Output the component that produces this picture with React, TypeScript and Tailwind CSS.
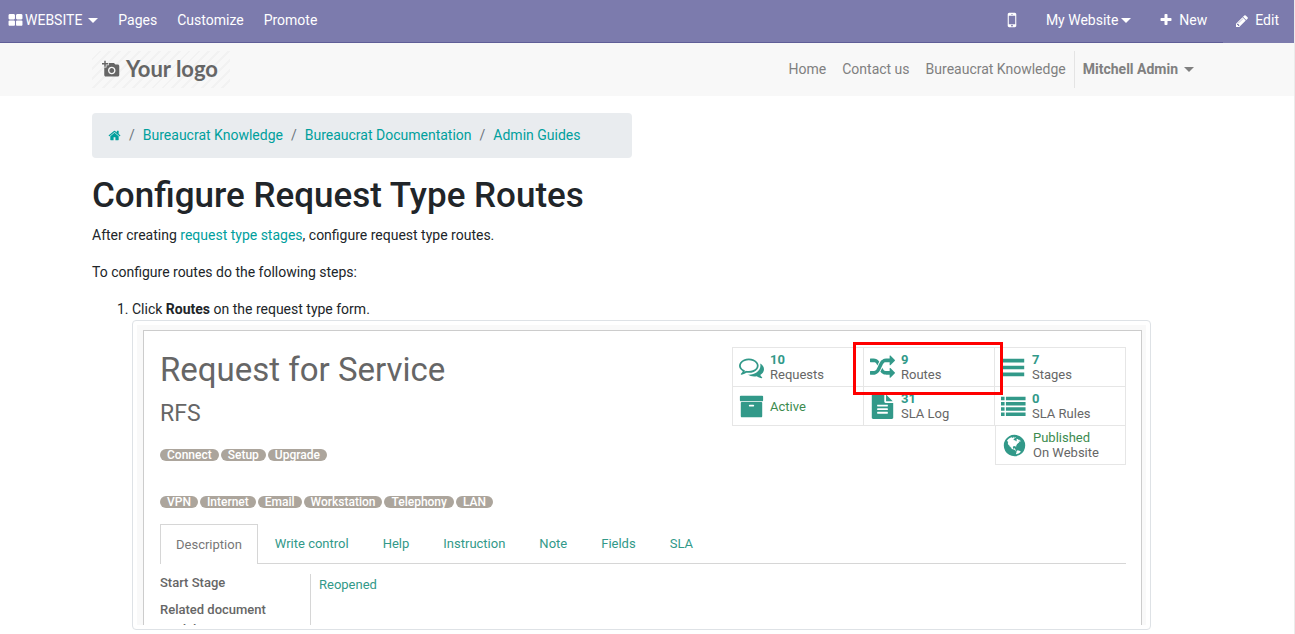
import type { ReactNode } from "react";
import { MdAddAPhoto } from "react-icons/md";

const paths = {
  thLarge:
    "M832 1024v384q0 52-38 90t-90 38h-512q-52 0-90-38t-38-90v-384q0-52 38-90t90-38h512q52 0 90 38t38 90zm0-768v384q0 52-38 90t-90 38h-512q-52 0-90-38t-38-90v-384q0-52 38-90t90-38h512q52 0 90 38t38 90zm896 768v384q0 52-38 90t-90 38h-512q-52 0-90-38t-38-90v-384q0-52 38-90t90-38h512q52 0 90 38t38 90zm0-768v384q0 52-38 90t-90 38h-512q-52 0-90-38t-38-90v-384q0-52 38-90t90-38h512q52 0 90 38t38 90z",
  mobile:
    "M976 1408q0-33-23.5-56.5t-56.5-23.5-56.5 23.5-23.5 56.5 23.5 56.5 56.5 23.5 56.5-23.5 23.5-56.5zm208-160v-704q0-13-9.5-22.5t-22.5-9.5h-512q-13 0-22.5 9.5t-9.5 22.5v704q0 13 9.5 22.5t22.5 9.5h512q13 0 22.5-9.5t9.5-22.5zm-192-848q0-16-16-16h-160q-16 0-16 16t16 16h160q16 0 16-16zm288-16v1024q0 52-38 90t-90 38h-512q-52 0-90-38t-38-90v-1024q0-52 38-90t90-38h512q52 0 90 38t38 90z",
  plus: "M1600 736v192q0 40-28 68t-68 28h-416v416q0 40-28 68t-68 28h-192q-40 0-68-28t-28-68v-416h-416q-40 0-68-28t-28-68v-192q0-40 28-68t68-28h416v-416q0-40 28-68t68-28h192q40 0 68 28t28 68v416h416q40 0 68 28t28 68z",
  pencil:
    "M491 1536l91-91-235-235-91 91v107h128v128h107zm523-928q0-22-22-22-10 0-17 7l-542 542q-7 7-7 17 0 22 22 22 10 0 17-7l542-542q7-7 7-17zm-54-192l416 416-832 832h-416v-416zm683 96q0 53-37 90l-166 166-416-416 166-165q36-38 90-38 53 0 91 38l235 234q37 39 37 91z",
  home: "M1472 992v480q0 26-19 45t-45 19h-384v-384h-256v384h-384q-26 0-45-19t-19-45v-480q0-1 .5-3t.5-3l575-474 575 474q1 2 1 6zm223-69l-62 74q-8 9-21 11h-3q-13 0-21-7l-692-577-692 577q-12 8-24 7-13-2-21-11l-62-74q-8-10-7-23.5t11-21.5l719-599q32-26 76-26t76 26l244 204v-195q0-14 9-23t23-9h192q14 0 23 9t9 23v408l219 182q10 8 11 21.5t-7 23.5z",
  comments:
    "M704 384q-153 0-286 52t-211.5 141-78.5 191q0 82 53 158t149 132l97 56-35 84q34-20 62-39l44-31 53 10q78 14 153 14 153 0 286-52t211.5-141 78.5-191-78.5-191-211.5-141-286-52zm0-128q191 0 353.5 68.5t256.5 186.5 94 257-94 257-256.5 186.5-353.5 68.5q-86 0-176-16-124 88-278 128-36 9-86 16h-3q-11 0-20.5-8t-11.5-21q-1-3-1-6.5t.5-6.5 2-6l2.5-5 3.5-5.5 4-5 4.5-5 4-4.5q5-6 23-25t26-29.5 22.5-29 25-38.5 20.5-44q-124-72-195-177t-71-224q0-139 94-257t256.5-186.5 353.5-68.5zm822 1169q10 24 20.5 44t25 38.5 22.5 29 26 29.5 23 25q1 1 4 4.5t4.5 5 4 5 3.5 5.5l2.5 5 2 6 .5 6.5-1 6.5q-3 14-13 22t-22 7q-50-7-86-16-154-40-278-128-90 16-176 16-271 0-472-132 58 4 88 4 161 0 309-45t264-129q125-92 192-212t67-254q0-77-23-152 129 71 204 178t75 230q0 120-71 224.5t-195 176.5z",
  random:
    "M666 481q-60 92-137 273-22-45-37-72.5t-40.5-63.5-51-56.5-63-35-81.5-14.5h-224q-14 0-23-9t-9-23v-192q0-14 9-23t23-9h224q250 0 410 225zm1126 799q0 14-9 23l-320 320q-9 9-23 9-13 0-22.5-9.5t-9.5-22.5v-192q-32 0-85 .5t-81 1-73-1-71-5-64-10.5-63-18.5-58-28.5-59-40-55-53.5-56-69.5q59-93 136-273 22 45 37 72.5t40.5 63.5 51 56.5 63 35 81.5 14.5h256v-192q0-14 9-23t23-9q12 0 24 10l319 319q9 9 9 23zm0-896q0 14-9 23l-320 320q-9 9-23 9-13 0-22.5-9.5t-9.5-22.5v-192h-256q-48 0-87 15t-69 45-51 61.5-45 77.5q-32 62-78 171-29 66-49.5 111t-54 105-64 100-74 83-90 68.5-106.5 42-128 16.5h-224q-14 0-23-9t-9-23v-192q0-14 9-23t23-9h224q48 0 87-15t69-45 51-61.5 45-77.5q32-62 78-171 29-66 49.5-111t54-105 64-100 74-83 90-68.5 106.5-42 128-16.5h256v-192q0-14 9-23t23-9q12 0 24 10l319 319q9 9 9 23z",
  bars: "M128 270h1536v260h-1536zM128 766h1536v260h-1536zM128 1262h1536v260h-1536z",
  archive:
    "M1088 832q0-26-19-45t-45-19h-256q-26 0-45 19t-19 45 19 45 45 19h256q26 0 45-19t19-45zm576-192v960q0 26-19 45t-45 19h-1408q-26 0-45-19t-19-45v-960q0-26 19-45t45-19h1408q26 0 45 19t19 45zm64-448v256q0 26-19 45t-45 19h-1536q-26 0-45-19t-19-45v-256q0-26 19-45t45-19h1536q26 0 45 19t19 45z",
  fileText:
    "M1596 476q14 14 28 36h-472v-472q22 14 36 28zm-476 164h544v1056q0 40-28 68t-68 28h-1344q-40 0-68-28t-28-68v-1600q0-40 28-68t68-28h800v544q0 40 28 68t68 28zm160 736v-64q0-14-9-23t-23-9h-704q-14 0-23 9t-9 23v64q0 14 9 23t23 9h704q14 0 23-9t9-23zm0-256v-64q0-14-9-23t-23-9h-704q-14 0-23 9t-9 23v64q0 14 9 23t23 9h704q14 0 23-9t9-23zm0-256v-64q0-14-9-23t-23-9h-704q-14 0-23 9t-9 23v64q0 14 9 23t23 9h704q14 0 23-9t9-23z",
  list: "M0 192h256v260h-256zM352 192h1408v260h-1408zM0 568h256v260h-256zM352 568h1408v260h-1408zM0 944h256v260h-256zM352 944h1408v260h-1408zM0 1320h256v260h-256zM352 1320h1408v260h-1408z",
  globe:
    "M896 128q209 0 385.5 103t279.5 279.5 103 385.5-103 385.5-279.5 279.5-385.5 103-385.5-103-279.5-279.5-103-385.5 103-385.5 279.5-279.5 385.5-103zm274 521q-2 1-9.5 9.5t-13.5 9.5q2 0 4.5-5t5-11 3.5-7q6-7 22-15 14-6 52-12 34-8 51 11-2-2 9.5-13t14.5-12q3-2 15-4.5t15-7.5l2-22q-12 1-17.5-7t-6.5-21q0 2-6 8 0-7-4.5-8t-11.5 1-9 1q-10-3-15-7.5t-8-16.5-4-15q-2-5-9.5-11t-9.5-10q-1-2-2.5-5.5t-3-6.5-4-5.5-5.5-2.5-7 5-7.5 10-4.5 5q-3-2-6-1.5t-4.5 1-4.5 3-5 3.5q-3 2-8.5 3t-8.5 2q15-5-1-11-10-4-16-3 9-4 7.5-12t-8.5-14h5q-1-4-8.5-8.5t-17.5-8.5-13-6q-8-5-34-9.5t-33-.5q-5 6-4.5 10.5t4 14 3.5 12.5q1 6-5.5 13t-6.5 12q0 7 14 15.5t10 21.5q-3 8-16 16t-16 12q-5 8-1.5 18.5t10.5 16.5q2 2 1.5 4t-3.5 4.5-5.5 4-6.5 3.5l-3 2q-11 5-20.5-6t-13.5-26q-7-25-16-30-23-8-29 1-5-13-41-26-25-9-58-4 6-1 0-15-7-15-19-12 3-6 4-17.5t1-13.5q3-13 12-23 1-1 7-8.5t9.5-13.5.5-6q35 4 50-11 5-5 11.5-17t10.5-17q9-6 14-5.5t14.5 5.5 14.5 5q14 1 15.5-11t-7.5-20q12 1 3-17-4-7-8-9-12-4-27 5-8 4 2 8-1-1-9.5 10.5t-16.5 17.5-16-5q-1-1-5.5-13.5t-9.5-13.5q-8 0-16 15 3-8-11-15t-24-8q19-12-8-27-7-4-20.5-5t-19.5 4q-5 7-5.5 11.5t5 8 10.5 5.5 11.5 4 8.5 3q14 10 8 14-2 1-8.5 3.5t-11.5 4.5-6 4q-3 4 0 14t-2 14q-5-5-9-17.5t-7-16.5q7 9-25 6l-10-1q-4 0-16 2t-20.5 1-13.5-8q-4-8 0-20 1-4 4-2-4-3-11-9.5t-10-8.5q-46 15-94 41 6 1 12-1 5-2 13-6.5t10-5.5q34-14 42-7l5-5q14 16 20 25-7-4-30-1-20 6-22 12 7 12 5 18-4-3-11.5-10t-14.5-11-15-5q-16 0-22 1-146 80-235 222 7 7 12 8 4 1 5 9t2.5 11 11.5-3q9 8 3 19 1-1 44 27 19 17 21 21 3 11-10 18-1-2-9-9t-9-4q-3 5 .5 18.5t10.5 12.5q-7 0-9.5 16t-2.5 35.5-1 23.5l2 1q-3 12 5.5 34.5t21.5 19.5q-13 3 20 43 6 8 8 9 3 2 12 7.5t15 10 10 10.5q4 5 10 22.5t14 23.5q-2 6 9.5 20t10.5 23q-1 0-2.5 1t-2.5 1q3 7 15.5 14t15.5 13q1 3 2 10t3 11 8 2q2-20-24-62-15-25-17-29-3-5-5.5-15.5t-4.5-14.5q2 0 6 1.5t8.5 3.5 7.5 4 2 3q-3 7 2 17.5t12 18.5 17 19 12 13q6 6 14 19.5t0 13.5q9 0 20 10t17 20q5 8 8 26t5 24q2 7 8.5 13.5t12.5 9.5l16 8 13 7q5 2 18.5 10.5t21.5 11.5q10 4 16 4t14.5-2.5 13.5-3.5q15-2 29 15t21 21q36 19 55 11-2 1 .5 7.5t8 15.5 9 14.5 5.5 8.5q5 6 18 15t18 15q6-4 7-9-3 8 7 20t18 10q14-3 14-32-31 15-49-18 0-1-2.5-5.5t-4-8.5-2.5-8.5 0-7.5 5-3q9 0 10-3.5t-2-12.5-4-13q-1-8-11-20t-12-15q-5 9-16 8t-16-9q0 1-1.5 5.5t-1.5 6.5q-13 0-15-1 1-3 2.5-17.5t3.5-22.5q1-4 5.5-12t7.5-14.5 4-12.5-4.5-9.5-17.5-2.5q-19 1-26 20-1 3-3 10.5t-5 11.5-9 7q-7 3-24 2t-24-5q-13-8-22.5-29t-9.5-37q0-10 2.5-26.5t3-25-5.5-24.5q3-2 9-9.5t10-10.5q2-1 4.5-1.5t4.5 0 4-1.5 3-6q-1-1-4-3-3-3-4-3 7 3 28.5-1.5t27.5 1.5q15 11 22-2 0-1-2.5-9.5t-.5-13.5q5 27 29 9 3 3 15.5 5t17.5 5q3 2 7 5.5t5.5 4.5 5-.5 8.5-6.5q10 14 12 24 11 40 19 44 7 3 11 2t4.5-9.5 0-14-1.5-12.5l-1-8v-18l-1-8q-15-3-18.5-12t1.5-18.5 15-18.5q1-1 8-3.5t15.5-6.5 12.5-8q21-19 15-35 7 0 11-9-1 0-5-3t-7.5-5-4.5-2q9-5 2-16 5-3 7.5-11t7.5-10q9 12 21 2 8-8 1-16 5-7 20.5-10.5t18.5-9.5q7 2 8-2t1-12 3-12q4-5 15-9t13-5l17-11q3-4 0-4 18 2 31-11 10-11-6-20 3-6-3-9.5t-15-5.5q3-1 11.5-.5t10.5-1.5q15-10-7-16-17-5-43 12zm-163 877q206-36 351-189-3-3-12.5-4.5t-12.5-3.5q-18-7-24-8 1-7-2.5-13t-8-9-12.5-8-11-7q-2-2-7-6t-7-5.5-7.5-4.5-8.5-2-10 1l-3 1q-3 1-5.5 2.5t-5.5 3-4 3 0 2.5q-21-17-36-22-5-1-11-5.5t-10.5-7-10-1.5-11.5 7q-5 5-6 15t-2 13q-7-5 0-17.5t2-18.5q-3-6-10.5-4.5t-12 4.5-11.5 8.5-9 6.5-8.5 5.5-8.5 7.5q-3 4-6 12t-5 11q-2-4-11.5-6.5t-9.5-5.5q2 10 4 35t5 38q7 31-12 48-27 25-29 40-4 22 12 26 0 7-8 20.5t-7 21.5q0 6 2 16z",
};

type IconName = keyof typeof paths;

function Icon({ name, className }: { name: IconName; className: string }) {
  return (
    <svg viewBox="0 0 1792 1792" fill="currentColor" aria-hidden="true" className={`shrink-0 ${className}`}>
      <path d={paths[name]} />
    </svg>
  );
}

function Caret() {
  return <span className="border-x-5 border-t-5 border-x-transparent border-t-current" />;
}

function TopBar() {
  return (
    <nav className="flex h-[43px] items-stretch justify-between bg-[#7c7bad] text-white">
      <div className="flex grow items-center justify-between border-b border-[#5f5e97] pb-0.5">
        <div className="flex items-center gap-5 pl-2">
          <button type="button" className="flex items-center">
            <Icon name="thLarge" className="mr-0.5 size-[15px]" />
            WEBSITE
            <span className="ml-1.5 flex">
              <Caret />
            </span>
          </button>
          <a href="#pages">Pages</a>
          <a href="#customize">Customize</a>
          <a href="#promote">Promote</a>
        </div>
        <div className="flex items-center pr-4">
          <button type="button" aria-label="Mobile preview" className="mr-6">
            <Icon name="mobile" className="size-5" />
          </button>
          <button type="button" className="mr-7 flex items-center gap-[3px]">
            My Website
            <Caret />
          </button>
          <button type="button" className="flex items-center gap-1.5">
            <Icon name="plus" className="size-3.5" />
            New
          </button>
        </div>
      </div>
      <button type="button" className="flex items-center gap-1.5 pr-[15px] pb-0.5 pl-3">
        <Icon name="pencil" className="size-3.5" />
        Edit
      </button>
    </nav>
  );
}

function SiteHeader() {
  return (
    <header className="bg-[#f8f8f8]">
      <div className="mx-auto flex h-[53px] max-w-[1140px] items-center justify-between px-[15px]">
        <a
          href="#home"
          className="flex h-[37px] w-[138px] items-center gap-1.5 bg-[repeating-linear-gradient(135deg,#f8f8f8_0px,#f8f8f8_5px,#f2f2f2_5px,#f2f2f2_7px)] pb-0.5 pl-[10px] font-[Lato,sans-serif] text-[22px] leading-6 font-bold text-[#666]"
        >
          <MdAddAPhoto className="size-[18px]" />
          Your logo
        </a>
        <nav className="flex items-center text-[#808080]">
          <a href="#home" className="px-2">
            Home
          </a>
          <a href="#contact" className="px-2">
            Contact us
          </a>
          <a href="#knowledge" className="px-2">
            Bureaucrat Knowledge
          </a>
          <button
            type="button"
            className="flex h-[37px] items-center gap-1.5 border-l border-[#e4e4e4] px-2 font-bold"
          >
            Mitchell Admin
            <Caret />
          </button>
        </nav>
      </div>
    </header>
  );
}

const crumbs = ["Bureaucrat Knowledge", "Bureaucrat Documentation", "Admin Guides"];

function Breadcrumb() {
  return (
    <nav aria-label="Breadcrumb" className="w-full max-w-[540px] rounded bg-[#e9ecef] px-4 py-3">
      <ol className="flex items-center text-[#00a09d]">
        <li>
          <a href="#home" aria-label="Home">
            <Icon name="home" className="size-[13px]" />
          </a>
        </li>
        {crumbs.map((label) => (
          <li key={label} className="flex">
            <span className="px-2 text-[#6c757d]">/</span>
            <a href="#crumb">{label}</a>
          </li>
        ))}
      </ol>
    </nav>
  );
}

function Stat({
  icon,
  value,
  label,
  className = "",
}: {
  icon: IconName;
  value: ReactNode;
  label?: string;
  className?: string;
}) {
  return (
    <button
      type="button"
      className={`flex items-center gap-[6px] border-r border-b border-[#e6e6e6] pl-[6px] text-left leading-[15px] ${className}`}
    >
      <Icon name={icon} className="size-[25px] text-[#329989]" />
      <span className="flex flex-col">
        {value}
        {label && <span className="text-[#666]">{label}</span>}
      </span>
    </button>
  );
}

function Count({ children }: { children: ReactNode }) {
  return <span className="font-bold text-[#329989]">{children}</span>;
}

function State({ children }: { children: ReactNode }) {
  return <span className="text-[#3c8b4f]">{children}</span>;
}

function StatGrid() {
  return (
    <div className="relative grid grid-cols-[132px_131px_131px] grid-rows-[40px_39px_39px]">
      <Stat icon="comments" value={<Count>10</Count>} label="Requests" className="border-t border-l" />
      <Stat icon="random" value={<Count>9</Count>} label="Routes" className="border-t" />
      <Stat icon="bars" value={<Count>7</Count>} label="Stages" className="border-t" />
      <Stat icon="archive" value={<State>Active</State>} className="border-l" />
      <Stat icon="fileText" value={<Count>31</Count>} label="SLA Log" />
      <Stat icon="list" value={<Count>0</Count>} label="SLA Rules" />
      <Stat
        icon="globe"
        value={<State>Published</State>}
        label="On Website"
        className="col-start-3 border-l"
      />
      <div className="pointer-events-none absolute -top-[5px] left-[121px] h-[53px] w-[150px] border-3 border-[#ff0000]" />
    </div>
  );
}

function Tags({ items }: { items: string[] }) {
  return (
    <ul className="flex gap-0.5">
      {items.map((item) => (
        <li
          key={item}
          className="h-3 rounded-full bg-[#aca59c] px-[7px] text-xs leading-3 font-medium text-white"
        >
          {item}
        </li>
      ))}
    </ul>
  );
}

const tabs = ["Write control", "Help", "Instruction", "Note", "Fields", "SLA"];

function RequestForm() {
  return (
    <figure className="rounded border border-[#dee2e6] bg-white p-1">
      <div className="h-[300px] overflow-hidden bg-[#f9f9f9] pt-[5px] pr-1 pl-1.5 text-[13px] text-[#666]">
        <div className="border border-[#ccc] bg-white py-4 pr-[15px] pl-4">
          <div className="flex h-[78px] items-start justify-between">
            <div>
              <h2 className="pt-[3px] text-[33px] leading-10">Request for Service</h2>
              <p className="mt-2.5 text-[23px] leading-7">RFS</p>
            </div>
            <StatGrid />
          </div>
          <div className="mt-6 flex flex-col gap-[35px]">
            <Tags items={["Connect", "Setup", "Upgrade"]} />
            <Tags items={["VPN", "Internet", "Email", "Workstation", "Telephony", "LAN"]} />
          </div>
          <div role="tablist" className="mt-4 flex h-10 border-b border-[#d6d6d6]">
            <button
              type="button"
              role="tab"
              aria-selected="true"
              className="-mb-px border border-b-0 border-[#d6d6d6] bg-white px-[15px] text-[#777]"
            >
              Description
            </button>
            {tabs.map((tab) => (
              <button
                key={tab}
                type="button"
                role="tab"
                aria-selected="false"
                className="px-[17px] text-[#329989]"
              >
                {tab}
              </button>
            ))}
          </div>
          <dl className="mt-[10px] grid grid-cols-[150px_1fr] leading-5">
            <div className="-mt-px flex flex-col gap-[7px] pr-8 font-medium">
              <dt>Start Stage</dt>
              <dt>Related document models</dt>
            </div>
            <dd className="border-l border-[#d6d6d6] pt-px pl-2">
              <a href="#stage" className="text-[#329989]">
                Reopened
              </a>
            </dd>
          </dl>
        </div>
      </div>
    </figure>
  );
}

export default function App() {
  return (
    <div className="min-h-screen border-r border-[#ebebeb] bg-white font-[Roboto,sans-serif] text-sm leading-[21px] text-[#212529]">
      <TopBar />
      <SiteHeader />
      <main className="mx-auto max-w-[1140px] px-[15px] pt-[17px]">
        <Breadcrumb />
        <h1 className="mt-[17px] mb-2 text-[35px] leading-[42px] font-medium">Configure Request Type Routes</h1>
        <p className="mb-4">
          After creating{" "}
          <a href="#stages" className="text-[#00a09d]">
            request type stages
          </a>
          , configure request type routes.
        </p>
        <p className="mb-4">To configure routes do the following steps:</p>
        <ol className="list-decimal pl-10">
          <li>
            <p>
              Click <strong className="font-bold">Routes</strong> on the request type form.
            </p>
            <div className="mr-[51px]">
              <RequestForm />
            </div>
          </li>
        </ol>
      </main>
    </div>
  );
}
